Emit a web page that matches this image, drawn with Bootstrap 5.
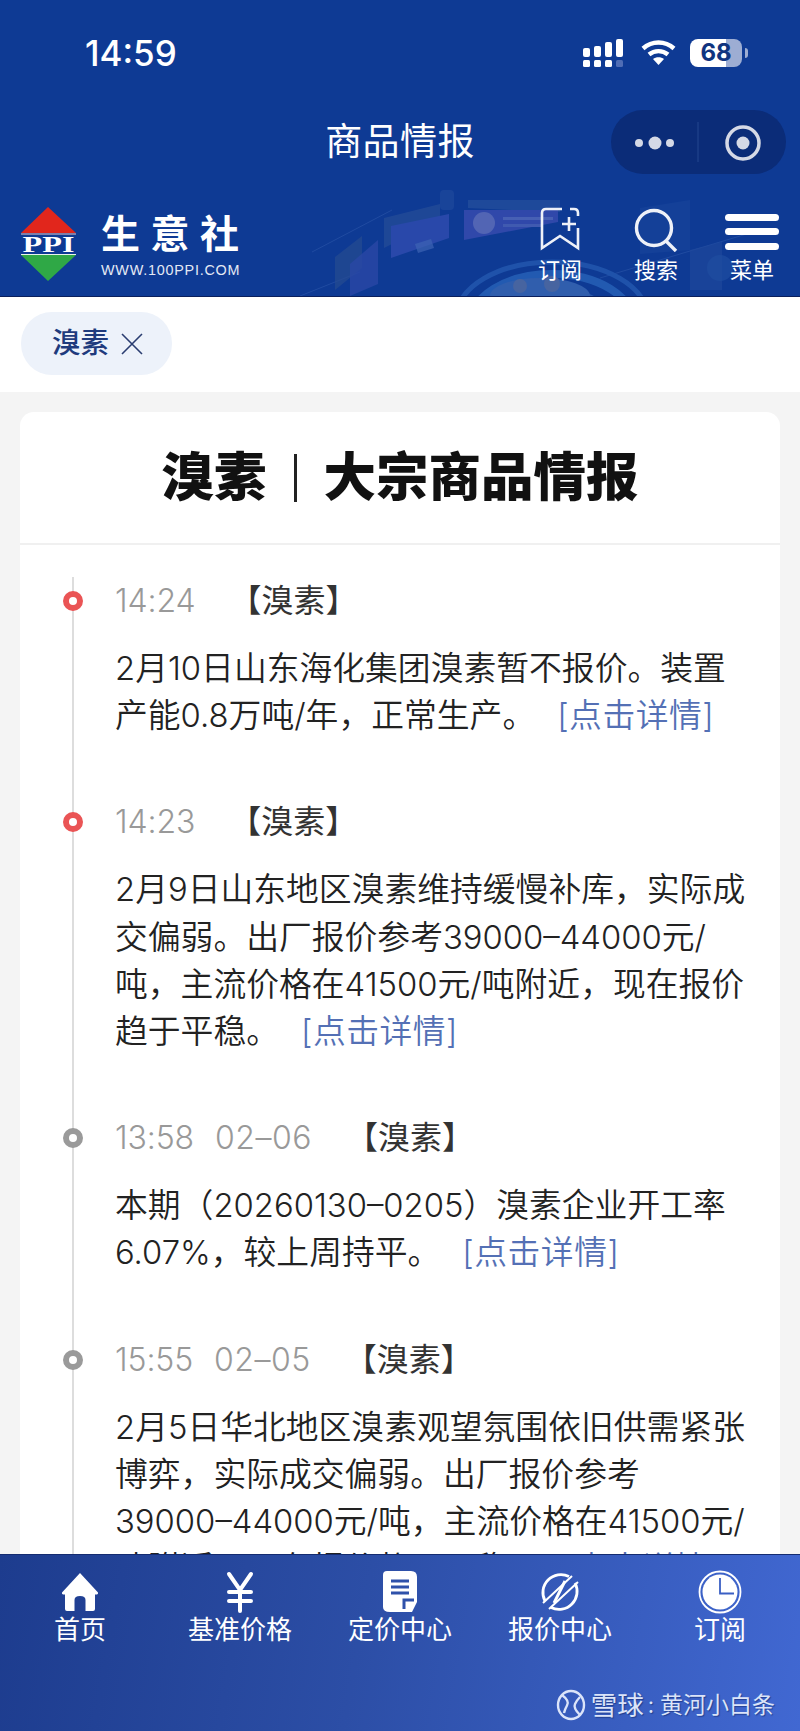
<!DOCTYPE html>
<html lang="zh-CN">
<head>
    <meta charset="UTF-8">
    <meta name="viewport" content="width=device-width, initial-scale=1.0">
    <title>商品情报</title>
    <link href="https://cdn.jsdelivr.net/npm/bootstrap@5.3.0/dist/css/bootstrap.min.css" rel="stylesheet">
    <style>
        html, body { margin: 0; height: 1731px; overflow: hidden; }
        body {
            font-family: Inter, "Noto Sans CJK SC", sans-serif;
            background: #f4f4f4;
            color: #222;
        }
        .screen { height: 1731px; width: 800px; }
        .blue-head { background: #0e3a94; color: #fff; height: 297px; border-bottom: 1px solid #0a1f5c; flex-shrink: 0; }
        .status-row { height: 95px; padding: 36px 52px 0 85px; }
        .clock-txt { font-size: 35px; font-weight: 500; line-height: 34px; }
        .status-icons { margin-top: 3px; }
        .wifi-icon { margin-left: 18px; margin-right: 14px; }
        .batt { width: 52px; height: 28px; border-radius: 8px; overflow: hidden; background: linear-gradient(90deg, #fff 70%, #9dadd3 70%); color: #10347f; font-size: 24px; font-weight: 700; line-height: 28px; text-align: center; }
        .batt-tip { width: 3px; height: 10px; background: #9dadd3; border-radius: 0 3px 3px 0; margin-left: 3px; }
        .title-row { display: grid; grid-template-columns: 1fr auto 1fr; align-items: center; height: 94px; }
        .page-title { font-size: 37px; line-height: 50px; letter-spacing: .4px; margin-bottom: 0; font-weight: 400; }
        .capsule { justify-self: end; margin-right: 14px; width: 175px; height: 64px; border-radius: 32px; background: #0b2c78; }
        .capsule svg { display: block; }
        .logo-row { height: 108px; position: relative; padding: 17px 0 0 20px; }
        .head-art { position: absolute; left: 0; top: 1px; width: 800px; height: 106px; opacity: .62; filter: blur(.6px); }
        .logo-box { position: relative; }
        .brand-name { font-size: 39px; font-weight: 700; line-height: 44px; letter-spacing: 10.5px; margin-top: 6px; white-space: nowrap; }
        .brand-url { font-family: "Liberation Sans", sans-serif; font-size: 14.4px; line-height: 18px; letter-spacing: .75px; color: #e4e9f5; margin-top: 5px; }
        .brand-wrap { margin-left: 23px; }
        .head-tools { position: relative; }
        .tool-item { width: 96px; text-align: center; font-size: 22px; line-height: 28px; }
        .tool-item svg { display: block; margin: 0 auto; }
        .chip-band { background: #fff; height: 95px; padding: 15px 21px; flex-shrink: 0; }
        .chip-tag { width: 151px; height: 63px; border-radius: 31px; background: #edf2fa; color: #1f3b7d; font-size: 28.5px; font-weight: 500; padding-left: 31px; }
        .chip-tag svg { margin-left: 12px; }
        .main-area { flex: 1 1 auto; min-height: 0; overflow: hidden; padding: 20px 20px 0; }
        .news-card { background: #fff; border-radius: 14px 14px 0 0; }
        .news-head { height: 133px; border-bottom: 2px solid #f0f0f0; font-size: 52.5px; font-weight: 900; color: #111; }
        .news-sep { width: 3px; height: 48px; background: #222; margin: 0 27px; }
        .news-list { margin: 32px 0 0 52px; border-left: 2px solid #ddd; padding: 0 20px 0 41px; }
        .news-item { position: relative; padding-bottom: 59px; }
        .news-dot { position: absolute; left: -52px; top: 14px; width: 20px; height: 20px; border-radius: 50%; border: 6px solid #9a9a9a; background: #fff; }
        .news-dot.is-new { border-color: #ea5455; }
        .news-meta { height: 47px; line-height: 47px; font-size: 32px; }
        .news-time { color: #999; font-weight: 300; letter-spacing: -.1px; }
        .news-date { color: #999; font-weight: 300; margin-left: 21px; letter-spacing: .5px; }
        .news-tag { color: #333; margin-left: 34px; }
        .news-body { margin: 21px 0 0; font-size: 32.8px; line-height: 47.2px; color: #222; font-weight: 350; white-space: nowrap; }
        .news-link { color: #5470b5; margin-left: 22px; letter-spacing: .5px; text-decoration: none; }
        .tab-bar { height: 177px; flex-shrink: 0; background: linear-gradient(100deg, #1d3c8e 0%, #2c4ea6 45%, #4168d2 100%); color: #fff; border-top: 1px solid #152c70; padding-top: 15px; position: relative; }
        .tab-item { width: 160px; text-align: center; font-size: 26px; line-height: 32px; }
        .tab-item svg { display: block; margin: 0 auto; }
        .water-mark { padding: 42px 25px 0 0; color: #dbe4f9; text-shadow: 1px 1px 1px rgba(15, 35, 100, .55); line-height: 34px; }
        .water-mark svg { margin-right: 5px; }
        .wm-a { font-size: 26.5px; }
        .wm-b { font-size: 23px; }
        .wm-c { font-size: 22px; margin: 0 6px 0 4px; }
    </style>
</head>
<body>
<div class="screen d-flex flex-column">

    <header class="blue-head">
        <div class="status-row d-flex justify-content-between align-items-start">
            <div class="clock-txt">14:59</div>
            <div class="status-icons d-flex align-items-center">
                <svg width="40" height="28" viewBox="0 0 40 28" fill="#fff">
                    <rect x="0" y="9" width="7" height="9" rx="2"/><rect x="11" y="7" width="7" height="11" rx="2"/><rect x="22" y="3" width="7" height="15" rx="2"/><rect x="33" y="0" width="7" height="18" rx="2"/>
                    <rect x="0" y="21" width="7" height="7" rx="1.5"/><rect x="11" y="21" width="7" height="7" rx="1.5"/><rect x="22" y="21" width="7" height="7" rx="1.5"/><rect x="33" y="21" width="7" height="7" rx="1.5" fill="#4f6db5"/>
                </svg>
                <svg class="wifi-icon" width="35" height="26" viewBox="0 0 35 26" fill="none" stroke="#fff" stroke-width="4.4">
                    <path d="M2 8.5C11 .5 24 .5 33 8.5"/><path d="M8 14.5c5.500-4.500 13.500-4.500 19 0"/><path d="M17.500 25l-5.500-6c3-2.500 8-2.500 11 0z" fill="#fff" stroke="none"/>
                </svg>
                <div class="batt">68</div>
                <div class="batt-tip"></div>
            </div>
        </div>
        <div class="title-row">
            <div></div>
            <h1 class="page-title">商品情报</h1>
            <div class="capsule d-flex align-items-center">
                <svg width="175" height="64" viewBox="0 0 175 64">
                    <circle cx="28" cy="33" r="4" fill="#d5d9e6"/><circle cx="44" cy="33" r="6.500" fill="#d5d9e6"/><circle cx="59" cy="33" r="4" fill="#d5d9e6"/>
                    <path d="M87 12v40" stroke="#24468f" stroke-width="1"/>
                    <circle cx="132" cy="33" r="16" fill="none" stroke="#d5d9e6" stroke-width="3.500"/><circle cx="132" cy="33" r="6.500" fill="#d5d9e6"/>
                </svg>
            </div>
        </div>
        <div class="logo-row d-flex justify-content-between align-items-start">
            <svg class="head-art" viewBox="0 0 800 106">
                <path d="M312 62L392 20M600 88L760 40M300 106L360 82" stroke="#2b55a8" stroke-width="1" fill="none"/>
                <rect x="440" y="0" width="14" height="20" rx="4" fill="#2a519f" opacity=".7"/>
                <path d="M335 100V67L362 46V78z" fill="#34558f" opacity=".7"/>
                <path d="M350 106V74L378 50V94z" fill="#3b50b0" opacity=".8"/>
                <path d="M384 58V28L440 14V30z" fill="#34589a" opacity=".7"/>
                <path d="M391 68V36L449 24V48z" fill="#3a52b8"/>
                <path d="M415 54l16-5 3 9-16 5z" fill="#5b7ec8" opacity=".7"/>
                <path d="M468 18V10H560V22z" fill="#2f5aa0" opacity=".8"/>
                <path d="M464 50V20H558V32z" fill="#4551b8"/>
                <circle cx="484" cy="33" r="11" fill="#7c80c8"/>
                <rect x="503" y="27" width="50" height="3" fill="#6a78c8"/><rect x="503" y="34" width="40" height="3" fill="#5f6fc2"/>
                <ellipse cx="552" cy="128" rx="96" ry="56" fill="none" stroke="#2a62b8" stroke-width="5"/>
                <ellipse cx="552" cy="134" rx="82" ry="50" fill="none" stroke="#2f6fc4" stroke-width="8"/>
                <ellipse cx="552" cy="140" rx="66" ry="44" fill="#3a69b6"/>
                <ellipse cx="540" cy="106" rx="50" ry="18" fill="#4674bd"/>
                <circle cx="520" cy="96" r="7" fill="#6a7ea8"/><circle cx="552" cy="94" r="8" fill="#6a7ea8"/>
                <path d="M640 64V18L690 10V60z" fill="#1a479e" opacity=".8"/>
                <path d="M690 100V60L722 52V100z" fill="#2a509f" opacity=".7"/>
                <circle cx="720" cy="78" r="13" fill="#2a5aa8" opacity=".7"/>
            </svg>
            <div class="logo-box d-flex">
                <svg width="58" height="76" viewBox="0 0 58 76">
                    <path d="M28 1L56 27H1z" fill="#e1261c"/>
                    <path d="M1 49H56L28 75z" fill="#2fa846"/>
                    <path d="M1 48.500H56" stroke="#e8f3ea" stroke-width="1"/>
                    <path d="M1 28H56" stroke="#e9c7c4" stroke-width="1"/>
                    <text x="28.500" y="46" text-anchor="middle" font-family="Liberation Serif" font-weight="700" font-size="23" textLength="52" lengthAdjust="spacingAndGlyphs" fill="#fff">PPI</text>
                </svg>
                <div class="brand-wrap">
                    <div class="brand-name">生意社</div>
                    <div class="brand-url">WWW.100PPI.COM</div>
                </div>
            </div>
            <div class="head-tools d-flex">
                <div class="tool-item">
                    <svg width="42" height="46" viewBox="0 0 42 46" fill="none" stroke="#eef1f8" stroke-width="2.600">
                        <path d="M23 3H7Q3 3 3 7V42L21 30 39 42V22"/><path d="M31 3H35Q39 3 39 7V10"/><path d="M30 11V25M23 18H37"/>
                    </svg>
                    <div class="mt-1">订阅</div>
                </div>
                <div class="tool-item">
                    <svg width="48" height="46" viewBox="0 0 48 46" fill="none" stroke="#eef1f8" stroke-width="3.400">
                        <circle cx="22" cy="22" r="17.500"/><path d="M34 35L44 45"/>
                    </svg>
                    <div class="mt-1">搜索</div>
                </div>
                <div class="tool-item">
                    <svg width="56" height="46" viewBox="0 0 56 46" fill="#fff">
                        <rect x="1" y="8" width="54" height="7" rx="3.500"/><rect x="1" y="22" width="54" height="7" rx="3.500"/><rect x="1" y="37" width="54" height="7" rx="3.500"/>
                    </svg>
                    <div class="mt-1">菜单</div>
                </div>
            </div>
        </div>
    </header>

    <div class="chip-band">
        <div class="chip-tag d-flex align-items-center">
            <span>溴素</span>
            <svg width="22" height="22" viewBox="0 0 22 22" fill="none" stroke="#2a3d70" stroke-width="1.600"><path d="M1 1L21 21M21 1L1 21"/></svg>
        </div>
    </div>

    <main class="main-area">
        <section class="news-card">
            <div class="news-head d-flex align-items-center justify-content-center">
                <span>溴素</span><span class="news-sep"></span><span>大宗商品情报</span>
            </div>
            <div class="news-list">
                <article class="news-item">
                    <span class="news-dot is-new"></span>
                    <div class="news-meta"><span class="news-time">14:24</span><span class="news-tag">【溴素】</span></div>
                    <p class="news-body">2月10日山东海化集团溴素暂不报价。装置<br>产能0.8万吨/年，正常生产。<a class="news-link" href="#">[点击详情]</a></p>
                </article>
                <article class="news-item">
                    <span class="news-dot is-new"></span>
                    <div class="news-meta"><span class="news-time">14:23</span><span class="news-tag">【溴素】</span></div>
                    <p class="news-body">2月9日山东地区溴素维持缓慢补库，实际成<br>交偏弱。出厂报价参考39000–44000元/<br>吨，主流价格在41500元/吨附近，现在报价<br>趋于平稳。<a class="news-link" href="#">[点击详情]</a></p>
                </article>
                <article class="news-item">
                    <span class="news-dot"></span>
                    <div class="news-meta"><span class="news-time">13:58</span><span class="news-date">02–06</span><span class="news-tag">【溴素】</span></div>
                    <p class="news-body">本期（20260130–0205）溴素企业开工率<br>6.07%，较上周持平。<a class="news-link" href="#">[点击详情]</a></p>
                </article>
                <article class="news-item">
                    <span class="news-dot"></span>
                    <div class="news-meta"><span class="news-time">15:55</span><span class="news-date">02–05</span><span class="news-tag">【溴素】</span></div>
                    <p class="news-body">2月5日华北地区溴素观望氛围依旧供需紧张<br>博弈，实际成交偏弱。出厂报价参考<br>39000–44000元/吨，主流价格在41500元/<br>吨附近，现在报价趋于平稳。<a class="news-link" href="#">[点击详情]</a></p>
                </article>
            </div>
        </section>
    </main>

    <footer class="tab-bar">
        <nav class="d-flex">
            <div class="tab-item">
                <svg width="44" height="44" viewBox="0 0 44 44" fill="#fff">
                    <path d="M22 3L40 22.500Q40.500 25 38 24.500H37V39Q37 41 35 41H27.500V30Q27.500 26 22 26T16.500 30V41H9Q7 41 7 39V24.500H6Q3.500 25 4 22.500z"/>
                </svg>
                <div>首页</div>
            </div>
            <div class="tab-item">
                <svg width="44" height="44" viewBox="0 0 44 44" fill="none" stroke="#fff" stroke-width="4" stroke-linecap="round">
                    <path d="M11 4L22 20L33 4M22 20V41M11 22H33M11 31H33"/>
                </svg>
                <div>基准价格</div>
            </div>
            <div class="tab-item">
                <svg width="44" height="44" viewBox="0 0 44 44">
                    <path d="M5 5Q5 1 9 1H33Q39 1 39 7V32L34 42H12Q5 42 5 37z" fill="#fff"/>
                    <path d="M13 11H31M13 17H31M13 23H31" stroke="#2f51aa" stroke-width="3" fill="none"/>
                    <path d="M26 39V30H36" stroke="#2f51aa" stroke-width="3" fill="none"/>
                </svg>
                <div>定价中心</div>
            </div>
            <div class="tab-item">
                <svg width="44" height="44" viewBox="0 0 44 44" fill="none" stroke="#fff" stroke-width="2.800">
                    <path d="M7 31A18 18 0 0 1 31 6.500"/><path d="M37 13A18 18 0 0 1 13 37.500"/>
                    <path d="M5 33L34 6M11 39L40 12" stroke-width="2"/><path d="M27 11L16 33" stroke-width="3"/>
                </svg>
                <div>报价中心</div>
            </div>
            <div class="tab-item">
                <svg width="44" height="44" viewBox="0 0 44 44">
                    <circle cx="22" cy="22" r="20.500" fill="none" stroke="#fff" stroke-width="1.800"/>
                    <circle cx="22" cy="22" r="17.500" fill="#fff"/>
                    <path d="M22 8V23.500H36" fill="none" stroke="#3a5fc4" stroke-width="1.800"/>
                </svg>
                <div>订阅</div>
            </div>
        </nav>
        <div class="water-mark d-flex justify-content-end align-items-center">
            <svg width="30" height="32" viewBox="0 0 30 32" fill="none" stroke="#dbe4f9" stroke-width="2.400">
                <ellipse cx="15" cy="16" rx="13" ry="14"/><path d="M6 6Q14 12 11 16.500Q9 20 8 24M24 8Q21 11 19 15Q17 19 24 26"/>
            </svg>
            <span class="wm-a">雪球</span><span class="wm-c">:</span><span class="wm-b">黄河小白条</span>
        </div>
    </footer>

</div>
<script src="https://cdn.jsdelivr.net/npm/bootstrap@5.3.0/dist/js/bootstrap.bundle.min.js"></script>
</body>
</html>
